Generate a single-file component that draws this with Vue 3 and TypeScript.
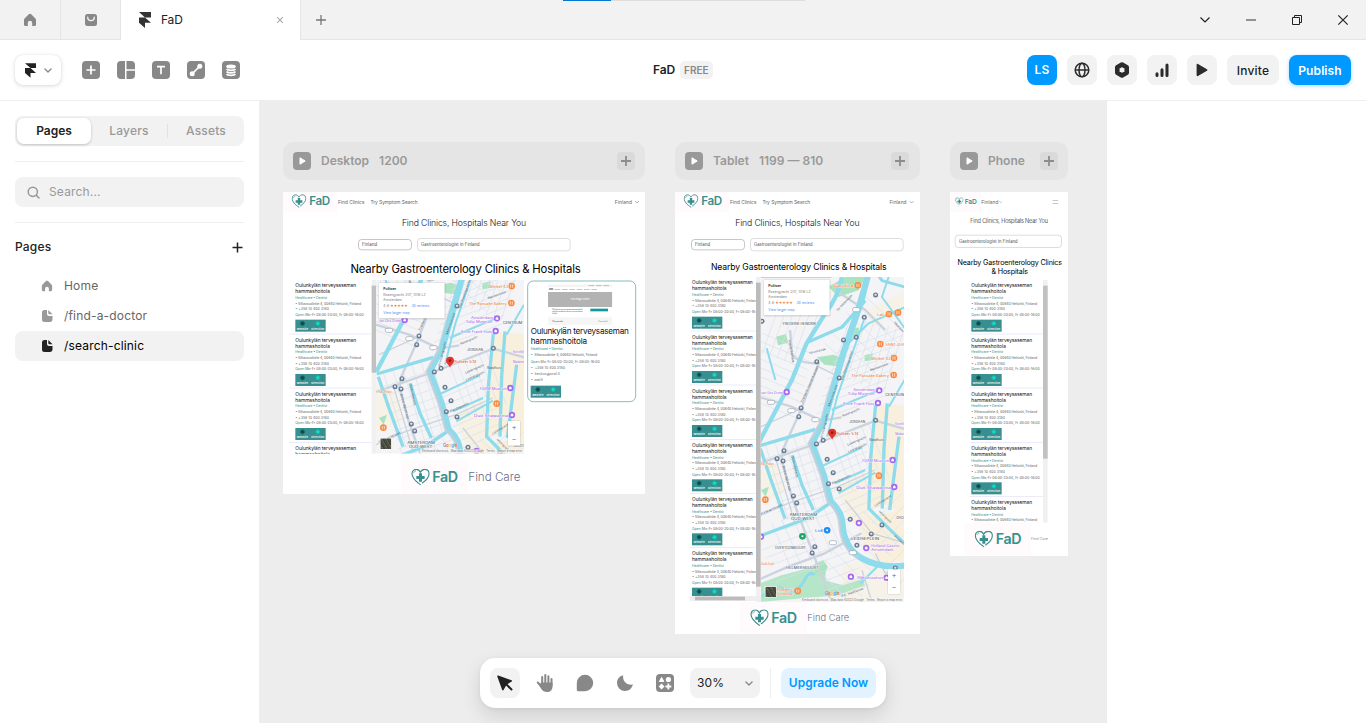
<script setup lang="ts">
import type { Directive } from 'vue'

/** Tracks a line of text so that it fills the given width. */
const vFit: Directive<HTMLElement, number> = {
  mounted(el, binding) {
    const count = (el.textContent ?? '').trim().length
    const gap = (binding.value - el.offsetWidth) / Math.max(count, 1)
    el.style.letterSpacing = `${gap.toFixed(3)}px`
  },
}

interface Frame {
  id: 'desktop' | 'tablet' | 'phone'
  name: string
  range: string
  items: number
  mapView: string
  heading: { text: string; width: number }[]
  titleWidth: number
  careWidth: number
}

const frames: Frame[] = [
  {
    id: 'desktop', name: 'Desktop', range: '1200', items: 4, mapView: '249 246 444 521',
    heading: [{ text: 'Nearby Gastroenterology Clinics & Hospitals', width: 691 }],
    titleWidth: 373, careWidth: 156,
  },
  {
    id: 'tablet', name: 'Tablet', range: '1199 — 810', items: 6, mapView: '258 21 428 975',
    heading: [{ text: 'Nearby Gastroenterology Clinics & Hospitals', width: 526 }],
    titleWidth: 373, careWidth: 126,
  },
  {
    id: 'phone', name: 'Phone', range: '', items: 5, mapView: '',
    heading: [{ text: 'Nearby Gastroenterology Clinics', width: 313 }, { text: '& Hospitals', width: 109 }],
    titleWidth: 233, careWidth: 50,
  },
]

const pages = [
  { name: 'Home', icon: 'home', active: false },
  { name: '/find-a-doctor', icon: 'page', active: false },
  { name: '/search-clinic', icon: 'page', active: true },
]

const nodes: [number, number][] = [
  [601, 75], [567, 142], [543, 202], [505, 210], [425, 275], [492, 324], [378, 414], [371, 440], [601, 451],
  [444, 511], [424, 522], [327, 542], [306, 566], [324, 573], [456, 568], [474, 608], [460, 641], [492, 657],
  [355, 678], [365, 699], [525, 748], [620, 765], [588, 792], [545, 826], [419, 830], [411, 849], [660, 894], [261, 154],
]
const orange: [number, number][] = [
  [548, 46], [641, 132], [668, 128], [615, 222], [656, 264], [655, 315], [611, 617], [271, 689], [368, 963],
]
const purple: [number, number][] = [
  [612, 361], [608, 399], [335, 366], [652, 570], [657, 651], [551, 759], [573, 834], [527, 920], [634, 923], [258, 800],
]
const labels: { x: number; y: number; t: string; w: number; c: string }[] = [
  { x: 475, y: 52, t: 'Carolina', w: 60, c: 'o' },
  { x: 606, y: 137, t: 'Lab', w: 20, c: 'o' },
  { x: 631, y: 227, t: 'SAINT-JEAN', w: 60, c: 'o' },
  { x: 588, y: 269, t: 'Winkel 43', w: 58, c: 'o' },
  { x: 528, y: 320, t: 'The Pancake Bakery', w: 113, c: 'o' },
  { x: 534, y: 363, t: 'Amsterdam', w: 66, c: 'p' },
  { x: 518, y: 375, t: 'Tulip Museum', w: 80, c: 'p' },
  { x: 503, y: 404, t: 'Anne Frank Huis', w: 94, c: 'p' },
  { x: 258, y: 372, t: 'van Ons Groep', w: 66, c: 'p' },
  { x: 561, y: 575, t: 'FOAM Museum', w: 80, c: 'p' },
  { x: 543, y: 656, t: 'Duo Shawarma', w: 104, c: 'p' },
  { x: 588, y: 831, t: 'Holland Casino', w: 84, c: 'p' },
  { x: 588, y: 843, t: 'Amsterdam', w: 66, c: 'p' },
  { x: 546, y: 927, t: 'Rijksmuseum', w: 80, c: 'p' },
  { x: 660, y: 466, t: 'Koninklijk', w: 34, c: 'p' },
  { x: 660, y: 496, t: 'Madame', w: 34, c: 'p' },
  { x: 484, y: 495, t: 'Pulitzer 5.14', w: 66, c: 'r' },
  { x: 420, y: 785, t: 'Lidl', w: 24, c: 'b' },
  { x: 306, y: 962, t: 'Robert', w: 48, c: 'o' },
  { x: 306, y: 974, t: 'Vondelbar', w: 48, c: 'o' },
  { x: 258, y: 586, t: 'Bar Polpo', w: 38, c: 'o' },
  { x: 258, y: 884, t: 'Oud Zuid', w: 38, c: 'o' },
  { x: 343, y: 737, t: 'AMSTERDAM', w: 83, c: 'd' },
  { x: 348, y: 749, t: 'OUD-WEST', w: 70, c: 'd' },
  { x: 528, y: 811, t: 'LEIDSEPLEIN', w: 84, c: 'd' },
  { x: 300, y: 836, t: 'OVERTOOMBUURT', w: 92, c: 'd' },
  { x: 333, y: 897, t: 'HELMERSBUURT', w: 98, c: 'd' },
  { x: 323, y: 164, t: 'FREDERIK HENDRIK', w: 100, c: 'd' },
  { x: 522, y: 460, t: 'JORDAAN', w: 48, c: 'd' },
  { x: 630, y: 377, t: 'CENTRUM', w: 58, c: 'd' },
  { x: 663, y: 746, t: 'GRACHT', w: 30, c: 'd' },
]
const streets: { x: number; y: number; r: number; t: string; w: number }[] = [
  { x: 340, y: 210, r: 80, t: 'Hugo de Grootkade', w: 68 },
  { x: 382, y: 398, r: -66, t: 'Frederik Hendrikstraat', w: 118 },
  { x: 464, y: 410, r: -70, t: 'Marnixstraat', w: 68 },
  { x: 442, y: 504, r: -76, t: 'Prinsengracht', w: 74 },
  { x: 502, y: 330, r: -70, t: 'Lijnbaansgracht', w: 90 },
  { x: 404, y: 252, r: -14, t: 'Nassaukade', w: 50 },
  { x: 488, y: 124, r: -47, t: 'De Wittenkade', w: 64 },
  { x: 503, y: 440, r: -22, t: 'Rozengracht', w: 55 },
  { x: 585, y: 304, r: -20, t: 'Westerstraat', w: 58 },
  { x: 518, y: 527, r: -23, t: 'Looiersgracht', w: 60 },
  { x: 520, y: 548, r: -23, t: 'Lauriergracht', w: 60 },
  { x: 582, y: 513, r: 0, t: 'Raadhuis', w: 42 },
  { x: 350, y: 560, r: 78, t: 'Bilderdijkkade', w: 64 },
  { x: 322, y: 588, r: 75, t: 'Bilderdijkstraat', w: 78 },
  { x: 472, y: 643, r: -24, t: 'Elandsgracht', w: 60 },
  { x: 258, y: 735, r: -24, t: 'Kinkerstraat', w: 72 },
  { x: 600, y: 710, r: -32, t: 'Leidsegracht', w: 58 },
  { x: 610, y: 725, r: 45, t: 'Keizersgracht', w: 50 },
  { x: 500, y: 982, r: -20, t: 'P.C. Hooftstraat', w: 70 },
  { x: 656, y: 800, r: 40, t: 'Prinsen', w: 34 },
  { x: 655, y: 158, r: 48, t: 'Haarlem', w: 40 },
]

/** Parallel minor streets, as one path. */
function hatch(x: number, y: number, dx: number, dy: number, sx: number, sy: number, n: number): string {
  return Array.from({ length: n }, (_, i) => `M${x + sx * i} ${y + sy * i}l${dx} ${dy}`).join('')
}
const minor = [
  hatch(262, 250, 60, -170, 22, 8, 6),
  hatch(262, 190, 150, 62, -6, 24, 9),
  hatch(470, 310, 60, -180, 22, 8, 8),
  hatch(480, 250, 210, -80, -8, 26, 9),
  hatch(270, 520, 70, 230, 28, -9, 6),
  hatch(262, 570, 150, -52, 8, 26, 9),
  hatch(445, 600, 130, -56, 8, 22, 8),
  hatch(470, 500, 60, 160, 22, -8, 6),
  hatch(262, 840, 150, -58, 10, 24, 5),
  hatch(290, 760, 60, 140, 30, -12, 7),
  hatch(400, 860, 120, -46, 12, 26, 6),
  hatch(560, 720, 110, 110, -22, 30, 7),
  hatch(590, 760, 90, -90, 14, 30, 7),
  hatch(560, 70, 130, 120, -22, 30, 6),
].join('')
</script>

<template>
  <div class="app">
    <svg class="defs" width="0" height="0" aria-hidden="true">
      <symbol id="framer" viewBox="0 0 12 16">
        <path d="M0 0h12v5.4H6zM0 5.4h6l6 5.4H6V16L0 10.8z" />
      </symbol>
      <symbol id="home" viewBox="0 0 14 14">
        <path d="M7 .8c.5 0 .9.2 1.2.5l4 3.9c.5.5.8 1.1.8 1.800V11.500c0 .8-.6 1.500-1.500 1.500H9.200V10a2.200 2.200 0 0 0-4.400 0v3H2.500C1.600 13 1 12.300 1 11.500V7c0-.7.3-1.300.8-1.800l4-3.900C6.100 1 6.500.8 7 .8z" />
      </symbol>
      <symbol id="page" viewBox="0 0 12 14">
        <path d="M3.500 1H6v4c0 1.100.9 2 2 2h3.500v3.500c0 1.400-1.100 2.500-2.500 2.500H3.500A2.500 2.500 0 0 1 1 10.500v-7A2.500 2.500 0 0 1 3.500 1zM7.300 1l4.200 4.300H8.300a1 1 0 0 1-1-1z" />
      </symbol>
      <symbol id="chevron" viewBox="0 0 10 6">
        <path d="M1.200 1.200 5 4.800l3.800-3.600" fill="none" stroke="currentColor" stroke-width="1.700" stroke-linecap="round" stroke-linejoin="round" />
      </symbol>
      <symbol id="heart" viewBox="0 0 57 51">
        <path d="M28 48C14 38 3 28 3 15 3 6 10 2 16 2c6 0 10 4 12 9 3-6 8-9 13-9 7 0 13 5 13 13 0 12-10 21-20 28" fill="none" stroke="#37908f" stroke-width="3.400" stroke-linecap="round" />
        <path d="M24 14h9v8h8v9h-8v8h-9v-8h-8v-9h8z" fill="#37908f" />
        <path d="M8 13c1-4 4-6 7-6" fill="none" stroke="#37908f" stroke-width="2" />
      </symbol>
      <symbol id="citymap" viewBox="249 0 444 996" overflow="visible">
        <rect x="249" y="0" width="444" height="996" fill="#f4f4f7" />
        <g fill="#f8f0dc">
          <path d="M601 406h92v330l-60-30-50 10z" />
          <path d="M480 650l90-50 20 110-20 90-50-60z" opacity=".7" />
          <path d="M560 740l133-20v150l-60 10-70-50z" />
          <path d="M249 560l60 30 20 80-80 30zM570 120l123-60v50l-100 60z" opacity=".6" />
          <path d="M500 890l100-30 93 40v96H500z" opacity=".5" />
        </g>
        <g fill="#a9e3bf">
          <path d="M249 0h220v24H249zM460 50l50-29h60l-20 40-60 20z" />
          <path d="M425 262l50-8 35 14-12 22-50-6z" />
          <path d="M303 200l30-8 6 26-30 8zM520 180l30-8 4 22-30 10z" />
          <path d="M258 660l24-10-10 30zM568 256l24-6v20l-24 4z" />
          <path d="M249 996v-54l70-26 60-16 48-20 22 12 4 40 50 14 60-20 6 20-80 30z" opacity=".85" />
          <path d="M420 880l24-10 14 20-12 30-26-6z" />
        </g>
        <path :d="minor" fill="none" stroke="#d8e1ea" stroke-width="2" />
        <g fill="none" stroke="#cbd3dd" stroke-linejoin="round">
          <path stroke-width="7" d="M249 582l172-60 180-70 92 26M249 380l100 30 90 42 60-10M345 180l6 70q10 30 80 30l-58 150-50 110-3 30 30 110 60 160 60 160M249 930l90-40 110-40 110-60M560 60l-40 130-60 180-40 150M480 60l90 60 60 60" />
          <path stroke-width="4" d="M249 740l90-40 150-50 110-50M300 560l60 200M510 690l80 100 103 30M600 850l30 60 60-20M560 900l30 96M430 290l60 30M258 470l110-50" />
        </g>
        <g fill="none" stroke="#8edbeb" stroke-linejoin="round">
          <path stroke-width="19" d="M582 0l-26 100-52 150-56 200-38 70 36 96 20 78q34 30 36 70 4 70 56 100 60 34 135 22" />
          <path stroke-width="13" d="M500 21q-10 60-50 110l-56 90-44 110-100 190" />
          <path stroke-width="10" d="M394 218l106-46 70-80M251 528l170-50M256 536l34 100 40 110M351 556l30 90 34 74M249 800l150-56 62-42M601 406l-15 160-5 150 60 60 52 50M636 400l-10 136-5 180M671 500l-28 220" />
          <path stroke-width="6" d="M275 235l26 95M566 150l-80 230-30 120M441 588l120-56M490 670l110-62M470 420l150-64M520 220l60-60 113-50M693 320l-52 90M480 640l90-40M640 21l-20 60 73 100M556 940l60-60" />
          <path stroke-width="9" d="M600 0l20 32 73 20M262 980q40-40 70-20t60-36q10-20 26-10" />
        </g>
        <path d="M446 452l-38 68 36 96 20 78q34 30 36 70 4 70 56 100" fill="none" stroke="#c5ced9" stroke-width="8" transform="translate(-7 0)" opacity=".8" />
        <g class="street">
          <text v-for="(s, i) in streets" :key="i" :textLength="s.w" lengthAdjust="spacingAndGlyphs" :transform="`translate(${s.x} ${s.y}) rotate(${s.r})`">{{ s.t }}</text>
        </g>
        <g fill="#fff" stroke="#9aa3af" stroke-width="2">
          <rect x="532" y="113" width="22" height="12" rx="5" /><rect x="277" y="391" width="22" height="12" rx="5" />
          <rect x="338" y="416" width="22" height="12" rx="5" /><rect x="410" y="443" width="22" height="12" rx="5" />
          <rect x="462" y="812" width="22" height="12" rx="5" /><rect x="522" y="842" width="22" height="12" rx="5" />
        </g>
        <g v-for="([x, y], i) in nodes" :key="'n' + i">
          <circle :cx="x" :cy="y" r="7.500" fill="#677a92" /><rect :x="x - 3" :y="y - 3.500" width="6" height="6" rx="1" fill="#dfe6ee" />
        </g>
        <g v-for="([x, y], i) in orange" :key="'o' + i">
          <circle :cx="x" :cy="y" r="10" fill="#fa8a3e" /><path :d="`M${x - 3} ${y - 5}v10M${x + 3} ${y - 5}v10`" stroke="#fff" stroke-width="2" />
        </g>
        <g v-for="([x, y], i) in purple" :key="'p' + i">
          <circle :cx="x" :cy="y" r="9.500" fill="#a568f2" /><path :d="`M${x - 4} ${y + 4}v-5l4-4 4 4v5z`" fill="#fff" />
        </g>
        <circle cx="456" cy="781" r="10" fill="#1b8ff5" /><circle cx="456" cy="781" r="3" fill="#fff" />
        <circle cx="382" cy="799" r="10" fill="#1da563" /><circle cx="382" cy="799" r="3" fill="#fff" />
        <text v-for="(l, i) in labels" :key="'l' + i" :x="l.x" :y="l.y" :textLength="l.w" lengthAdjust="spacingAndGlyphs" :class="['lab', l.c]">{{ l.t }}</text>
        <path d="M471 509c-2-9-12-12-12-21a12 12 0 0 1 24 0c0 9-10 12-12 21z" fill="#e4342b" />
        <circle cx="471" cy="488" r="4" fill="#9b1a17" />
      </symbol>
    </svg>

    <div class="loading"><i></i></div>
    <header class="tabs">
      <div class="tab small"><svg width="14" height="14"><use href="#home" /></svg></div>
      <div class="tab small">
        <svg width="14" height="14" viewBox="0 0 14 14"><rect x="1" y="1" width="12" height="12" rx="2.500" fill="#888" /><path d="M3.700 4.300a3.300 3.300 0 0 0 6.600 0" fill="none" stroke="#f2f2f2" stroke-width="1.400" stroke-linecap="round" /></svg>
      </div>
      <div class="tab current">
        <svg class="mark" width="12" height="16"><use href="#framer" /></svg>
        <span>FaD</span>
        <svg class="close" width="8" height="8" viewBox="0 0 8 8"><path d="M1.200 1.200l5.600 5.600M6.800 1.200L1.200 6.800" stroke="#aaa" stroke-width="1.100" /></svg>
      </div>
      <svg class="new" width="12" height="12" viewBox="0 0 12 12"><path d="M6 1v10M1 6h10" stroke="#777" stroke-width="1.300" /></svg>
      <div class="window">
        <svg width="12" height="8" viewBox="0 0 12 8"><path d="M1.500 1.500 6 6l4.500-4.500" fill="none" stroke="#222" stroke-width="1.200" /></svg>
        <svg width="12" height="12" viewBox="0 0 12 12"><path d="M1 6h10" stroke="#333" stroke-width="1" /></svg>
        <svg width="12" height="12" viewBox="0 0 12 12"><path d="M1.500 3.500h7v7h-7zM3.500 3.500v-2h7v7h-2" fill="none" stroke="#222" /></svg>
        <svg width="12" height="12" viewBox="0 0 12 12"><path d="M1.300 1.300l9.400 9.400M10.700 1.300l-9.400 9.400" stroke="#222" stroke-width="1.200" /></svg>
      </div>
    </header>

    <div class="toolbar">
      <button class="menu"><svg width="11" height="15"><use href="#framer" /></svg><svg class="chev" width="8" height="5"><use href="#chevron" /></svg></button>
      <div class="tools">
        <svg viewBox="0 0 18 18"><rect width="18" height="18" rx="4" /><path d="M9 4.500v9M4.500 9h9" class="w" /></svg>
        <svg viewBox="0 0 18 18"><path d="M4 0h4v18H4a4 4 0 0 1-4-4V4a4 4 0 0 1 4-4zM9.500 0H14a4 4 0 0 1 4 4v4.200H9.500zM9.500 9.700H18V14a4 4 0 0 1-4 4H9.500z" /></svg>
        <svg viewBox="0 0 18 18"><rect width="18" height="18" rx="4" /><path d="M5 5.700h8M9 5.700v7.600" class="w" /></svg>
        <svg viewBox="0 0 18 18"><rect width="18" height="18" rx="4" /><path d="M5.500 12.500l7-7" class="w" /><circle cx="5.200" cy="12.800" r="2.500" class="f" /><circle cx="12.800" cy="5.200" r="2.500" class="f" /></svg>
        <svg viewBox="0 0 18 18"><rect width="18" height="18" rx="4" /><ellipse cx="9" cy="5.500" rx="4.800" ry="2" class="f" /><path d="M4.700 8c1 1.700 7.600 1.700 8.600 0M4.700 10.500c1 1.700 7.600 1.700 8.600 0M4.700 13c1 1.700 7.600 1.700 8.600 0" class="w" /></svg>
      </div>
      <div class="project"><b>FaD</b><span>FREE</span></div>
      <div class="actions">
        <span class="btn avatar">LS</span>
        <span class="btn"><svg width="16" height="16" viewBox="0 0 16 16" fill="none" stroke="#2b2b2b" stroke-width="1.500"><circle cx="8" cy="8" r="6.800" /><ellipse cx="8" cy="8" rx="3" ry="6.800" /><path d="M1.200 8h13.600" /></svg></span>
        <span class="btn"><svg width="16" height="16" viewBox="0 0 16 16"><path d="M8 2.600l4.700 2.700v5.400L8 13.400l-4.700-2.700V5.300z" fill="none" stroke="#2b2b2b" stroke-width="4.600" stroke-linejoin="round" /></svg></span>
        <span class="btn"><svg width="16" height="16" viewBox="0 0 16 16" stroke="#2b2b2b" stroke-width="3" stroke-linecap="round"><path d="M3 11.800v1.700M8 7.800v5.700M13 3v10.500" /></svg></span>
        <span class="btn"><svg width="14" height="14" viewBox="0 0 14 14"><path d="M2.500 1.700l9 5.300-9 5.300z" fill="#2b2b2b" stroke="#2b2b2b" stroke-width="1.800" stroke-linejoin="round" /></svg></span>
        <span class="btn invite">Invite</span>
        <span class="btn publish">Publish</span>
      </div>
    </div>

    <main class="work">
      <aside class="side">
        <div class="seg"><span class="on">Pages</span><span>Layers</span><span class="last">Assets</span></div>
        <hr />
        <div class="search"><svg width="13" height="13" viewBox="0 0 13 13" fill="none" stroke="#999" stroke-width="1.500" stroke-linecap="round"><circle cx="5.800" cy="5.800" r="4.600" /><path d="M9.400 9.400l2.600 2.600" /></svg>Search...</div>
        <hr />
        <div class="pages-head">Pages<svg width="11" height="11" viewBox="0 0 11 11"><path d="M5.500.500v10M.500 5.500h10" stroke="#222" stroke-width="1.500" /></svg></div>
        <div v-for="p in pages" :key="p.name" :class="['page', { active: p.active }]">
          <svg width="12" height="14"><use :href="'#' + p.icon" /></svg>{{ p.name }}
        </div>
      </aside>

      <section class="canvas">
        <div v-for="f in frames" :key="f.id" :class="['frame', f.id]">
          <div class="label">
            <svg width="18" height="18" viewBox="0 0 18 18"><rect width="18" height="18" rx="4" fill="#999" /><path d="M7 5.800l5.200 3.200L7 12.200z" fill="#fff" stroke="#fff" stroke-linejoin="round" /></svg>
            <b>{{ f.name }}</b><b v-if="f.range" class="range">{{ f.range }}</b>
            <span class="add"><svg width="10" height="10" viewBox="0 0 10 10"><path d="M5 0v10M0 5h10" stroke="#8c8c8c" stroke-width="1.800" /></svg></span>
          </div>
          <div class="viewport">
            <article class="board">
              <nav class="nav">
                <div class="brand"><svg class="heart"><use href="#heart" /></svg><span class="t" v-fit="f.id === 'phone' ? 36 : 61">FaD</span></div>
                <template v-if="f.id !== 'phone'">
                  <span class="t l1" v-fit="79">Find Clinics</span>
                  <span class="t l2" v-fit="f.id === 'tablet' ? 143 : 142">Try Symptom Search</span>
                </template>
                <span class="t country" v-fit="52">Finland</span>
                <svg class="arrow" width="14" height="8" viewBox="0 0 14 8"><path d="M1 1l6 6 6-6" fill="none" stroke="#666" stroke-width="1.500" /></svg>
                <svg v-if="f.id === 'phone'" class="burger" width="18" height="12" viewBox="0 0 18 12"><path d="M0 1h18M0 11h18" stroke="#777" stroke-width="1.500" /></svg>
              </nav>
              <div class="title"><span class="t" v-fit="f.titleWidth">Find Clinics, Hospitals Near You</span></div>
              <div class="fields">
                <div v-if="f.id !== 'phone'" class="field place"><span class="t" v-fit="46">Finland</span></div>
                <div class="field query"><span class="t" v-fit="176">Gastroenterologist in Finland</span></div>
              </div>
              <div class="h2"><span v-for="h in f.heading" :key="h.text" class="t" v-fit="h.width">{{ h.text }}</span></div>
              <div class="body">
                <div class="list">
                  <div v-for="n in f.items" :key="n" class="clinic">
                    <span class="t name" v-fit="182">Oulunkylän terveysaseman</span>
                    <span class="t name" v-fit="104">hammashoitola</span>
                    <span class="t teal" v-fit="95">Healthcare • Dentist</span>
                    <span class="t" v-fit="197"><em>•</em> Siltavoudintie 4, 00640 Helsinki, Finland</span>
                    <span class="t" v-fit="101"><em>•</em> +358 10 400 3180</span>
                    <span class="t" v-fit="205"><em>Open</em> Mo-Fr 08:00-20:00, Fr 08:00-16:00</span>
                    <div class="cta">
                      <span><i class="globe"></i><b v-fit="34">Website</b></span><span><i></i><b v-fit="39">Direction</b></span>
                    </div>
                  </div>
                </div>
                <div class="bar"><i></i></div>
                <div v-if="f.mapView" class="map">
                  <svg class="mapart" :viewBox="f.mapView" preserveAspectRatio="none"><use href="#citymap" x="249" y="0" width="444" height="996" /></svg>
                  <div class="mapcard">
                    <b class="t" v-fit="38">Pulitzer</b>
                    <span class="t" v-fit="127">Rozengracht 207, 1016 LZ</span>
                    <span class="t" v-fit="56">Amsterdam</span>
                    <span class="stars"><span class="t" v-fit="18">4.6</span><em>★★★★★</em><a class="t" v-fit="54">38 reviews</a></span>
                    <a class="t" v-fit="79">View larger map</a>
                  </div>
                  <div class="zoom"><span>+</span><span>−</span></div>
                  <div class="sat"></div>
                  <span class="google"><i>G</i><i>o</i><i>o</i><i>g</i><i>l</i><i>e</i></span>
                  <span class="credits">Keyboard shortcuts&nbsp;&nbsp; Map data ©2023 Google&nbsp;&nbsp; Terms&nbsp;&nbsp; Report a map error</span>
                </div>
                <div v-if="f.id === 'desktop'" class="detail">
                  <div class="shot">
                    <div class="s0"><i></i><i></i><i></i></div>
                    <div class="s1"><b>Oral</b><i v-for="k in 6" :key="k"></i></div>
                    <div class="s2">Hero image content</div>
                    <div class="s3"><p>Oulunkylän terveysaseman hammashoitola palvelee asiakkaita arkisin ja tarjoaa hoitoa kaikille</p><u></u></div>
                    <div class="s4"><b>Yhteystiedot</b><em>Katso kaikki</em></div>
                  </div>
                  <span class="t big" v-fit="294">Oulunkylän terveysaseman</span>
                  <span class="t big" v-fit="169">hammashoitola</span>
                  <span class="t row teal" v-fit="96">Healthcare • Dentist</span>
                  <span class="t row" v-fit="199"><em>•</em>&nbsp; Siltavoudintie 4, 00640 Helsinki, Finland</span>
                  <span class="t row" v-fit="207"><em>Open</em> Mo-Fr 08:00-20:00, Fr 08:00-16:00</span>
                  <span class="t row" v-fit="103"><em>•</em>&nbsp; +358 10 400 3180</span>
                  <span class="t row" v-fit="88"><em>▪</em>&nbsp; keskus@oral.fi</span>
                  <span class="t row" v-fit="36"><em>•</em>&nbsp; oral.fi</span>
                  <div class="cta">
                    <span><i class="globe"></i><b v-fit="34">Website</b></span><span><i></i><b v-fit="39">Direction</b></span>
                  </div>
                </div>
              </div>
              <footer class="foot">
                <div class="brand"><svg class="heart"><use href="#heart" /></svg><span class="t" v-fit="76">FaD</span></div>
                <span class="t care" v-fit="f.careWidth">Find Care</span>
              </footer>
            </article>
          </div>
        </div>

        <div class="dock">
          <span class="tool on"><svg width="18" height="18" viewBox="0 0 18 18"><path d="M2 2.200l13.300 4.700-5.300 3.200-3.100 5.600z" fill="#222" stroke="#222" stroke-width="1.500" stroke-linejoin="round" /><path d="M9.500 9.500l6 6" stroke="#222" stroke-width="2" stroke-linecap="round" /></svg></span>
          <span class="tool"><svg width="18" height="20" viewBox="0 0 18 20"><g fill="none" stroke="#888" stroke-width="2" stroke-linecap="round"><path d="M6.200 4v8M9.300 2v9M12.400 3.200v9M15.500 6v7M1.800 9.500l4 4.500" /></g><path d="M5.200 9.500h11.300v4c0 3.500-2.300 5.500-5.500 5.500-2.700 0-4.300-1-5.700-3L3 12z" fill="#888" /></svg></span>
          <span class="tool"><svg width="18" height="18" viewBox="0 0 18 18"><path d="M9 .800a8.200 8.200 0 1 1 0 16.400H2.300A1.500 1.500 0 0 1 .800 15.700V9A8.200 8.200 0 0 1 9 .800z" fill="#888" /></svg></span>
          <span class="tool"><svg width="18" height="18" viewBox="0 0 18 18"><path d="M7.200 1.200C6.300 6.500 10 11.500 16.900 10.600 16 14.400 13 17 9 17A8 8 0 0 1 1 9C1 5 3.500 2 7.200 1.200z" fill="#888" /></svg></span>
          <span class="tool"><svg width="18" height="18" viewBox="0 0 18 18"><rect width="18" height="18" rx="4" fill="#888" /><g fill="#fff"><path d="M5.600 3.400l2.200 4.100H3.400z" stroke="#fff" stroke-linejoin="round" /><circle cx="12.400" cy="5.500" r="2.600" /><path d="M5.600 9.600l2.900 2.900-2.900 2.900-2.900-2.900z" /><path d="M11.500 9.600h1.800v2h2v1.800h-2v2h-1.800v-2h-2v-1.800h2z" /></g></svg></span>
          <span class="percent">30%<svg class="chev" width="8" height="5"><use href="#chevron" /></svg></span>
          <i class="rule"></i>
          <span class="upgrade">Upgrade Now</span>
        </div>
      </section>
      <aside class="right"></aside>
    </main>
  </div>
</template>

<style>
html, body { margin: 0; height: 100%; overflow: hidden; }
</style>

<style scoped>
* { box-sizing: border-box; }
.app { width: 1366px; height: 723px; overflow: hidden; display: flex; flex-direction: column; background: #fff; color: #222; font: 500 12px/1 Inter, "Liberation Sans", sans-serif; letter-spacing: .17px; position: relative; }
.defs { position: absolute; }
svg { display: block; flex: none; }
em, i { font-style: normal; }
.loading { position: absolute; left: 563px; top: 0; width: 242px; height: 1px; background: #ddd; z-index: 2; }
.loading i { display: block; width: 48px; height: 1px; background: #0078d4; }

.tabs { height: 40px; flex: none; display: flex; align-items: center; background: #f2f2f2; border-bottom: 1px solid #e5e5e5; }
.tab { height: 39px; display: flex; align-items: center; border-right: 1px solid #e5e5e5; fill: #888; }
.tab.small { width: 61px; justify-content: center; padding-top: 1px; }
.tab.small + .tab.small { width: 60px; }
.tab.current { width: 180px; height: 40px; align-self: flex-start; background: #fff; padding: 0 16px 0 18px; font-weight: 400; letter-spacing: -.2px; }
.mark { fill: #333; margin-right: 10px; }
.close { margin-left: auto; }
.new { margin-left: 14px; }
.window { margin-left: auto; display: flex; align-items: center; gap: 34px; padding-right: 17px; }

.toolbar { height: 61px; flex: none; display: flex; align-items: center; border-bottom: 1px solid #eee; padding: 0 15px; position: relative; }
.menu { width: 46px; height: 30px; border: 0; border-radius: 8px; background: #fff; box-shadow: 0 0 1px rgba(0,0,0,.12), 0 1px 4px rgba(0,0,0,.15); display: flex; align-items: center; gap: 8px; padding: 0 0 0 9.500px; color: #888; fill: #222; }
.tools { display: flex; gap: 17px; margin-left: 21px; }
.tools svg { width: 18px; height: 18px; fill: #888; }
.tools .w { fill: none; stroke: #fff; stroke-width: 1.700; }
.tools .f { fill: #fff; }
.project { position: absolute; left: 653px; top: 21px; display: flex; gap: 5px; align-items: center; letter-spacing: -.1px; }
.project b { font-weight: 600; }
.project span { font-size: 10px; font-weight: 600; color: #888; background: #f2f2f2; border-radius: 5px; padding: 4px 4px; height: 18px; letter-spacing: 0; }
.actions { margin-left: auto; display: flex; gap: 10px; }
.btn { width: 30px; height: 30px; border-radius: 8px; background: #f2f2f2; display: flex; align-items: center; justify-content: center; }
.avatar { background: #09f; color: #fff; font-weight: 600; }
.invite { width: 52px; padding-top: 2px; }
.publish { width: 62px; padding-top: 2px; background: #09f; color: #fff; font-weight: 600; box-shadow: 0 1px 4px rgba(0,153,255,.35); letter-spacing: .1px; }

.work { flex: 1; display: flex; min-height: 0; }
.side { width: 260px; flex: none; border-right: 1px solid #eee; padding: 15px 15px 0; }
.side hr { border: 0; border-top: 1px solid #eee; margin: 15px 0; }
.seg { height: 30px; border-radius: 8px; background: #f2f2f2; display: flex; align-items: center; color: #999; padding: 2px 0 2px 2px; }
.seg span { flex: 1; height: 26px; display: flex; align-items: center; justify-content: center; }
.seg .on { flex: none; width: 74px; background: #fff; color: #222; border-radius: 7px; font-weight: 600; box-shadow: 0 1px 3px rgba(0,0,0,.2); letter-spacing: 0; }
.seg .last { height: 14px; border-left: 1px solid #e2e2e2; }
.search { height: 30px; border-radius: 8px; background: #f2f2f2; color: #999; display: flex; align-items: center; gap: 9px; padding-left: 12px; font-weight: 400; }
.pages-head { display: flex; align-items: center; justify-content: space-between; height: 18px; margin-bottom: 15px; padding-right: 1px; }
.page { height: 30px; border-radius: 8px; display: flex; align-items: center; gap: 11px; padding-left: 26px; color: #666; fill: #999; font-weight: 400; }
.page.active { background: #f2f2f2; color: #000; fill: #222; }

.canvas { width: 847px; flex: none; background: #ededed; position: relative; overflow: hidden; }
.frame { position: absolute; top: 41px; }
.frame.desktop { left: 23px; width: 362px; }
.frame.tablet { left: 415px; width: 245px; }
.frame.phone { left: 690px; width: 118px; }
.label { height: 38px; margin-bottom: 12px; border-radius: 10px; background: #e5e5e5; display: flex; align-items: center; padding: 0 10px; color: #999; }
.tablet .label { padding-right: 11px; }
.label b { font-weight: 600; margin-left: 10px; letter-spacing: 0; }
.add { width: 18px; height: 18px; border-radius: 4px; background: #dadada; margin-left: auto; display: flex; align-items: center; justify-content: center; }
.desktop .viewport { height: 302px; }
.tablet .viewport { height: 442px; }
.phone .viewport { height: 364px; }
.viewport { overflow: hidden; background: #fff; }

/* Artboards are laid out at three times their size on the canvas. */
.board { transform: scale(.33333); transform-origin: 0 0; font-size: 13px; font-weight: 400; color: #666; letter-spacing: 0; }
.desktop .board { width: 1086px; }
.tablet .board { width: 734px; }
.phone .board { width: 354px; }
.t { display: block; width: max-content; white-space: nowrap; flex: none; }
.board em, .board .teal { color: #37908f; }
.nav { height: 60px; display: flex; align-items: center; font-size: 14.500px; }
.brand { display: flex; align-items: center; background: #fffbfc; color: #37908f; font-weight: 600; height: 100%; }
.nav .brand { width: 163px; padding: 0 0 5px 25px; font-size: 35px; gap: 8px; }
.nav .heart { width: 46px; height: 43px; }
.l1 { margin-left: 2px; }
.l2 { margin-left: 18px; }
.country { margin-left: auto; }
.arrow { margin: 0 17px 0 8px; }
.phone .nav .brand { width: 93px; padding: 0 0 4px 15px; gap: 3px; font-size: 20px; }
.phone .nav .heart { width: 26px; height: 26px; }
.phone .country { margin-left: 1px; }
.phone .arrow { width: 10px; margin: 0 0 0 1px; }
.burger { margin: 0 29px 0 auto; }
.title { margin-top: 16px; height: 32px; line-height: 32px; font-size: 26px; font-weight: 300; color: #111; display: flex; justify-content: center; }
.phone .title { margin-top: 12px; height: 30px; line-height: 30px; font-size: 16.500px; }
.fields { margin-top: 31px; height: 38px; display: flex; align-items: center; gap: 17px; padding-left: 226px; }
.tablet .fields { padding-left: 49px; }
.phone .fields { margin-top: 27px; padding-left: 15px; }
.field { border: 1.500px solid #999; border-radius: 10px; padding-left: 10px; display: flex; align-items: center; color: #444; font-size: 12.500px; }
.place { width: 160px; height: 32px; border-color: #555; }
.query { width: 459px; height: 38px; }
.phone .query { width: 320px; padding-left: 11px; }
.h2 { margin-top: 33px; height: 40px; line-height: 40px; font-size: 34px; font-weight: 400; color: #000; padding-left: 9px; display: flex; flex-direction: column; align-items: center; }
.desktop .h2 { margin-bottom: 14px; }
.tablet .h2 { margin-top: 29px; font-size: 26px; padding-left: 8px; }
.phone .h2 { margin-top: 33px; height: 50px; line-height: 25px; font-size: 21.500px; padding-left: 4px; }
.body { display: flex; height: 521px; padding-left: 18px; }
.tablet .body { position: relative; margin-top: 9px; height: 975px; padding-left: 45px; }
.phone .body { margin-top: 14px; height: 728px; padding-left: 58px; }
.list { width: 248px; overflow: hidden; flex: none; }
.tablet .list { width: 198px; height: 957px; border-bottom: 0; }
.phone .list { width: 221px; }
.clinic { height: 162.500px; border-bottom: 2px solid #e2e2f8; padding: 8px 0 0 19px; line-height: 17px; font-size: 10.500px; color: #666; }
.phone .clinic, .tablet .clinic { padding-left: 6px; }
.name { font-size: 14.500px; line-height: 18px; color: #111; font-weight: 400; }
.name + .teal { margin-top: 1px; }
.cta { width: 91px; height: 36px; margin-top: 6px; background: #37908f; color: #fff; display: flex; justify-content: space-around; }
.cta span { display: flex; flex-direction: column; align-items: center; gap: 2px; padding-top: 4px; }
.cta i { width: 15px; height: 15px; border-radius: 50%; background: #0de0c8; border: 3px solid #18b5a6; }
.cta .globe { background: #0c4a4c; border-color: #15696a; }
.cta b { font-size: 8px; line-height: 12px; font-weight: 600; white-space: nowrap; }
.bar { width: 13px; flex: none; background: #f0f0f0; padding-top: 17px; }
.bar i { display: block; height: 261px; background: #c1c1c1; }
.tablet .bar { width: 14px; }
.tablet .bar i { height: 912px; background: #bbb; }
.phone .bar { width: 14px; }
.phone .bar i { height: 519px; }
.tablet .body::after { content: ""; position: absolute; left: 45px; top: 957px; width: 212px; height: 15px; background: linear-gradient(#bbb, #bbb) 15px 2px / 150px 11px no-repeat #eee; }
.map { position: relative; width: 444px; flex: none; overflow: hidden; }
.tablet .map { width: 429px; margin-left: 1px; }
.mapart { width: 100%; height: 100%; }
.mapcard { position: absolute; left: 9px; top: 9px; width: 197px; height: 106px; background: #fff; box-shadow: 0 1px 4px rgba(0,0,0,.25); padding: 10px 0 0 13px; font-size: 10px; line-height: 16px; color: #777; }
.mapcard b { color: #333; }
.mapcard a { color: #4a8cf0; }
.stars { display: flex; gap: 3px; line-height: 22px; }
.stars em { color: #f0762a; font-size: 10px; letter-spacing: 0; margin-right: 8px; }
.board .stars em { color: #f0762a; }
.zoom { position: absolute; right: 12px; bottom: 24px; width: 36px; height: 74px; background: #fff; box-shadow: 0 1px 4px rgba(0,0,0,.3); display: flex; flex-direction: column; }
.zoom span { flex: 1; font-size: 24px; font-weight: 300; line-height: 36px; text-align: center; color: #666; }
.sat { position: absolute; left: 11px; bottom: 12px; width: 37px; height: 36px; border: 2px solid #fff; background: repeating-linear-gradient(60deg, #4c4f43 0 5px, #625f50 5px 8px, #3d443c 8px 12px); }
.google { position: absolute; left: 200px; bottom: 16px; font-size: 13px; font-weight: 500; line-height: 16px; text-shadow: 0 0 2px #fff; }
.tablet .google { left: 191px; bottom: 18px; }
.google i { color: #4285f4; }
.google i:nth-child(2), .google i:nth-child(6) { color: #ea4335; }
.google i:nth-child(3) { color: #fbbc05; }
.google i:nth-child(5) { color: #34a853; }
.credits { position: absolute; right: 0; bottom: 0; font-size: 8.500px; line-height: 13px; background: rgba(245,245,245,.8); color: #777; padding: 0 5px; white-space: nowrap; }
.detail { width: 326px; height: 364px; margin: 2px 0 0 10px; border: 2.500px solid #4d9c9b; border-radius: 18px; padding: 9px 0 0 8px; line-height: 18.300px; font-size: 10.500px; color: #666; }
.shot { width: 193px; height: 122px; margin: 0 0 5px 52px; font-size: 5px; line-height: 6px; overflow: hidden; background: #fff; }
.shot i { height: 2px; background: #aaa; width: 17px; }
.s0 { height: 8px; background: #f4f4f4; display: flex; gap: 5px; justify-content: flex-end; align-items: center; padding-right: 10px; }
.s1 { height: 15px; display: flex; gap: 5px; align-items: center; padding-left: 3px; color: #222; font-size: 6px; }
.s2 { height: 45px; line-height: 45px; background: #b3b3b3; color: #fff; text-align: center; font-size: 6px; }
.s3 { height: 31px; display: flex; justify-content: space-between; padding: 5px 13px; }
.s3 p { width: 106px; margin: 0; font-size: 4.500px; line-height: 6px; color: #333; }
.s3 u { width: 53px; height: 8px; background: #14999a; }
.s4 { height: 23px; background: #f6f6f6; display: flex; justify-content: space-between; align-items: center; padding: 0 13px; }
.big { font-size: 24.500px; line-height: 29px; color: #111; }
.big + .row { margin-top: 1px; }
.detail .cta { margin-top: 8px; }
.foot { height: 100px; margin-top: 20px; display: flex; align-items: center; color: #666d8a; }
.foot .brand { width: 201px; margin-left: 354px; padding-left: 30px; gap: 7px; font-size: 43px; }
.foot .heart { width: 57px; height: 51px; }
.care { font-size: 35px; font-weight: 300; margin-left: 1px; }
.tablet .foot { height: 94px; margin-top: 0; }
.tablet .foot .brand { margin-left: 195px; }
.tablet .care { font-size: 28px; }
.phone .foot { margin-top: 0; height: 98px; }
.phone .foot .brand { margin-left: 43px; width: 200px; }
.phone .care { font-size: 11px; margin-left: 0; }

.street { font-size: 9px; font-weight: 400; fill: #5a6472; }
.lab { font-size: 10px; font-weight: 500; paint-order: stroke; stroke: #fff; stroke-width: 1.500px; }
.lab.o { fill: #e8843e; }
.lab.p { fill: #a974e8; }
.lab.r { fill: #d8504a; }
.lab.b { fill: #2b83e8; }
.lab.d { fill: #555f6c; font-size: 9px; }

.dock { position: absolute; left: 220px; bottom: 15px; width: 406px; height: 50px; border-radius: 15px; background: #fff; box-shadow: 0 8px 20px rgba(0,0,0,.12), 0 1px 4px rgba(0,0,0,.06); display: flex; align-items: center; padding: 0 10px; gap: 10px; }
.tool { width: 30px; height: 30px; border-radius: 8px; display: flex; align-items: center; justify-content: center; }
.tool.on { background: #f2f2f2; }
.percent { width: 70px; height: 30px; border-radius: 8px; background: #f2f2f2; display: flex; align-items: center; justify-content: space-between; padding: 0 7px; font-weight: 400; }
.chev { color: #888; }
.rule { width: 1px; height: 30px; background: #eee; }
.upgrade { width: 95px; height: 30px; border-radius: 8px; background: #e2f3ff; color: #09f; font-weight: 600; display: flex; align-items: center; justify-content: center; white-space: nowrap; letter-spacing: 0; }
</style>
